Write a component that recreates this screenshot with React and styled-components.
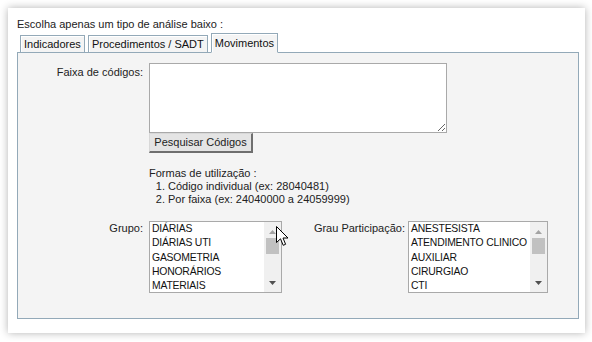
import React from "react";
import styled, { createGlobalStyle } from "styled-components";

const GlobalStyle = createGlobalStyle`
  html, body {
    margin: 0;
    padding: 0;
    background: #ffffff;
  }
  body {
    font-family: "Liberation Sans", Arial, sans-serif;
    font-size: 11px;
    color: #222;
  }
`;

const grupos = ["DIÁRIAS", "DIÁRIAS UTI", "GASOMETRIA", "HONORÁRIOS", "MATERIAIS"];
const graus = ["ANESTESISTA", "ATENDIMENTO CLINICO", "AUXILIAR", "CIRURGIAO", "CTI"];

const App = () => {
  return (
    <Page>
      <GlobalStyle />
      <Card>
        <Intro>Escolha apenas um tipo de análise baixo :</Intro>
        <Tabs>
          <Tab>Indicadores</Tab>
          <Tab>Procedimentos / SADT</Tab>
          <Tab active>Movimentos</Tab>
        </Tabs>
        <Panel>
          <Row>
            <Label>Faixa de códigos:</Label>
            <Field>
              <Codes />
              <SearchButton>Pesquisar Códigos</SearchButton>
              <Help>
                Formas de utilização :
                <HelpList>
                  <li>Código individual (ex: 28040481)</li>
                  <li>Por faixa (ex: 24040000 a 24059999)</li>
                </HelpList>
              </Help>
            </Field>
          </Row>
          <ListsRow>
            <Label>Grupo:</Label>
            <Listbox items={grupos} width={133} />
            <Label width={120}>Grau Participação:</Label>
            <Listbox items={graus} width={140} />
          </ListsRow>
        </Panel>
        <Cursor width="13" height="21" viewBox="0 0 13 21">
          <path
            d="M0.5 0.5 L0.5 16.5 L4.5 12.8 L7.2 19.3 L9.6 18.3 L7 12 L12 12 Z"
            fill="#fff"
            stroke="#000"
            strokeWidth="1"
            strokeLinejoin="round"
          />
        </Cursor>
      </Card>
    </Page>
  );
};

const Listbox = ({ items, width }) => (
  <Box width={width}>
    <Items>
      {items.map((item) => (
        <Item key={item}>{item}</Item>
      ))}
    </Items>
    <Scrollbar>
      <Arrow viewBox="0 0 7 4" width="7" height="4" color="#a3a3a3">
        <path d="M0 4 L3.5 0 L7 4 Z" />
      </Arrow>
      <Thumb />
      <Spacer />
      <Arrow viewBox="0 0 7 4" width="7" height="4" color="#505050">
        <path d="M0 0 L3.5 4 L7 0 Z" />
      </Arrow>
    </Scrollbar>
  </Box>
);

const Page = styled.div`
  padding: 8px 7px 8px 8px;
`;

const Card = styled.div`
  position: relative;
  width: 562px;
  height: 325px;
  padding: 0 6px 0 9px;
  background: #fff;
  box-shadow: 0 0 8px rgba(0, 0, 0, 0.3);
`;

const Intro = styled.div`
  padding-top: 10px;
  height: 15px;
  line-height: 13px;
`;

const Tabs = styled.div`
  display: flex;
  align-items: flex-end;
  gap: 3px;
  padding-left: 3px;
  height: 19px;
  position: relative;
  z-index: 1;
`;

const Tab = styled.div`
  box-sizing: border-box;
  height: ${(p) => (p.active ? "20px" : "17px")};
  padding: ${(p) => (p.active ? "2px 3px 0" : "1px 3px 0")};
  margin-bottom: ${(p) => (p.active ? "-1px" : "0")};
  border: 1px solid #93a9b8;
  border-bottom: ${(p) => (p.active ? "1px solid #f4f4f4" : "none")};
  background: #f4f4f4;
  box-shadow: inset 1px 1px 0 #ffffff;
  line-height: 14px;
  color: #111;
`;

const Panel = styled.div`
  box-sizing: border-box;
  height: 267px;
  border: 1px solid #93a9b8;
  background: #f4f4f4;
  padding-top: 10px;
`;

const Row = styled.div`
  display: flex;
  align-items: flex-start;
`;

const ListsRow = styled.div`
  display: flex;
  align-items: flex-start;
  margin-top: 13px;
`;

const Label = styled.div`
  box-sizing: border-box;
  width: ${(p) => p.width || 128}px;
  padding-right: 3px;
  margin-right: 3px;
  padding-top: 3px;
  text-align: right;
  white-space: nowrap;
  ${(p) => p.width && "margin-left: 3px; padding-right: 0;"}
`;

const Field = styled.div`
  display: flex;
  flex-direction: column;
  align-items: flex-start;
`;

const Codes = styled.textarea`
  box-sizing: border-box;
  display: block;
  width: 298px;
  height: 70px;
  margin: 0;
  border: 1px solid #a9a9a9;
  background: #fff;
  font: inherit;
`;

const SearchButton = styled.button`
  box-sizing: border-box;
  height: 20px;
  width: 104px;
  margin: 0;
  padding: 0 0 1px;
  font: inherit;
  color: #222;
  background: #e4e4e4;
  border-style: solid;
  border-width: 1px 2px 2px 1px;
  border-color: #d8d8d8 #6f6f6f #6f6f6f #d8d8d8;
  line-height: 16px;
`;

const Help = styled.div`
  margin-top: 14px;
  line-height: 13px;
`;

const HelpList = styled.ol`
  margin: 0;
  padding-left: 19px;
`;

const Box = styled.div`
  box-sizing: border-box;
  display: flex;
  width: ${(p) => p.width}px;
  height: 72px;
  margin-top: 2px;
  border: 1px solid #a9a9a9;
  background: #fff;
  overflow: hidden;
`;

const Items = styled.div`
  flex: 1;
  padding: 0 0 0 2px;
  min-width: 0;
`;

const Item = styled.div`
  height: 14.3px;
  line-height: 14px;
  white-space: nowrap;
  font-size: 10.4px;
  letter-spacing: -0.2px;
  color: #111;
`;

const Scrollbar = styled.div`
  width: 17px;
  flex: none;
  background: #f0f0f0;
  display: flex;
  flex-direction: column;
  align-items: center;
  padding: 8px 0 7px;
`;

const Arrow = styled.svg`
  display: block;
  fill: ${(p) => p.color};
`;

const Thumb = styled.div`
  width: 13px;
  height: 16px;
  margin-top: 4px;
  background: #c1c1c1;
`;

const Spacer = styled.div`
  flex: 1;
`;

const Cursor = styled.svg`
  position: absolute;
  left: 268px;
  top: 218px;
  z-index: 5;
`;

export default App;
